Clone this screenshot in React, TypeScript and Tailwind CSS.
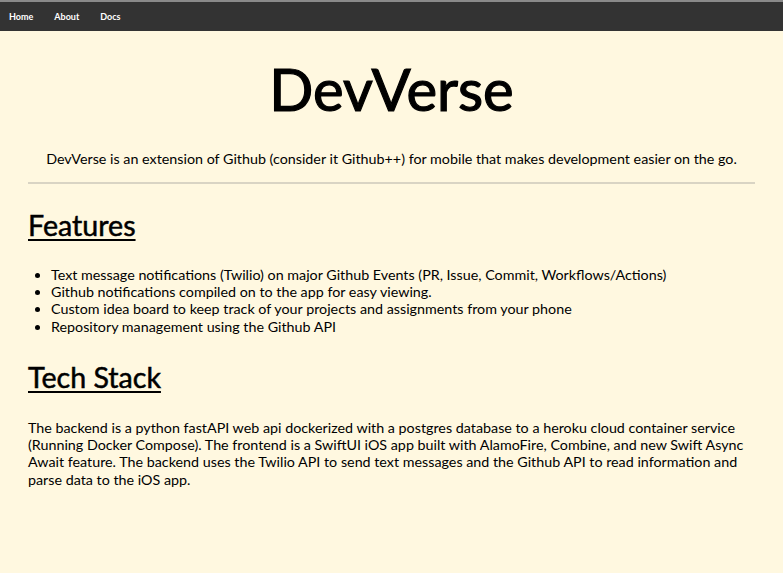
import React from 'react';

const features = [
  'Text message notifications (Twilio) on major Github Events (PR, Issue, Commit, Workflows/Actions)',
  'Github notifications compiled on to the app for easy viewing.',
  'Custom idea board to keep track of your projects and assignments from your phone',
  'Repository management using the Github API',
];

const App: React.FC = () => {
  return (
    <div className="min-h-screen bg-[#fff8e0] text-black font-['Lato','Open_Sans',sans-serif]">
      {/* Nav */}
      <nav className="h-[31px] bg-[#333333] border-t-2 border-[#8a8a8a] flex items-center px-[9px] gap-[21px] text-[9px] font-bold text-white">
        <a href="#">Home</a>
        <a href="#">About</a>
        <a href="#">Docs</a>
      </nav>

      <main className="px-[28px]">
        <h1 className="text-center text-[58px] leading-none mt-[29px] [-webkit-text-stroke:1.2px_black]">
          DevVerse
        </h1>
        <p className="text-center text-[14.3px] leading-[17.3px] mt-[32px]">
          DevVerse is an extension of Github (consider it Github++) for mobile that makes development easier on the go.
        </p>
        <hr className="mt-[15px] border-t-2 border-[#d9d4c4]" />

        <h2 className="text-[28.6px] underline underline-offset-[3px] decoration-2 mt-[27px] leading-none [-webkit-text-stroke:0.5px_black]">
          Features
        </h2>
        <ul className="list-disc pl-[23px] mt-[26px] text-[14.3px] leading-[17.3px]">
          {features.map((f) => (
            <li key={f}>{f}</li>
          ))}
        </ul>

        <h2 className="text-[28.6px] underline underline-offset-[3px] decoration-2 mt-[28px] leading-none [-webkit-text-stroke:0.5px_black]">
          Tech Stack
        </h2>
        <p className="mt-[27px] text-[14.3px] leading-[17.3px]">
          The backend is a python fastAPI web api dockerized with a postgres database to a heroku cloud container service (Running Docker Compose). The frontend is a SwiftUI iOS app built with AlamoFire, Combine, and new Swift Async Await feature. The backend uses the Twilio API to send text messages and the Github API to read information and parse data to the iOS app.
        </p>
      </main>
    </div>
  );
};

export default App;
